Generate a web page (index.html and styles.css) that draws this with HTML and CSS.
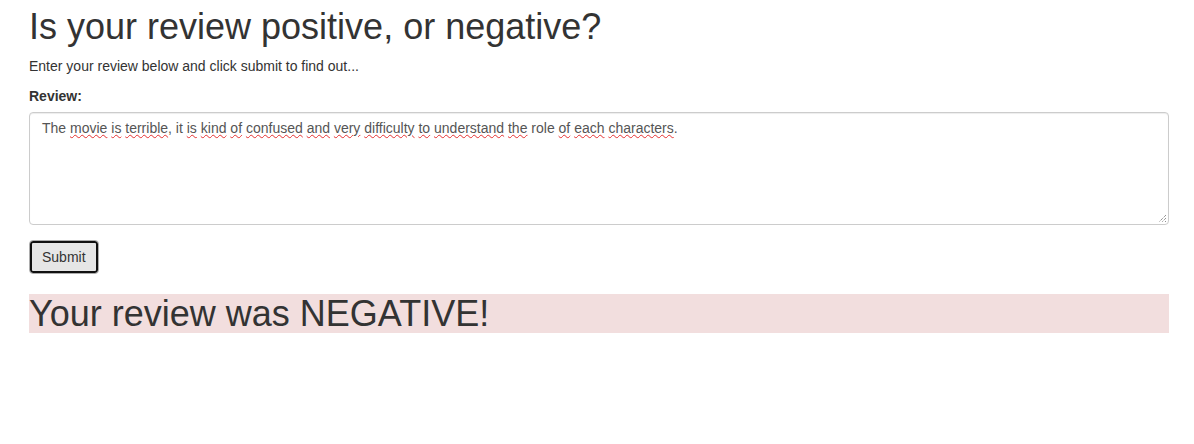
FILE: index.html
```html
<!DOCTYPE html>
<html lang="en">
<head>
<meta charset="utf-8">
<title>Review sentiment</title>
<link rel="stylesheet" href="styles.css">
</head>
<body>
<div class="container">
  <h1 class="title">Is your review positive, or negative?</h1>
  <p class="lead-text">Enter your review below and click submit to find out...</p>
  <form class="review-form">
    <div class="form-group">
      <label class="field-label">Review:</label>
      <div class="textbox" role="textbox" aria-multiline="true">The <span class="sp">movie</span> <span class="sp">is</span> <span class="sp">terrible</span>, it <span class="sp">is</span> <span class="sp">kind</span> <span class="sp">of</span> <span class="sp">confused</span> <span class="sp">and</span> <span class="sp">very</span> <span class="sp">difficulty</span> <span class="sp">to</span> <span class="sp">understand</span> <span class="sp">the</span> role <span class="sp">of</span> <span class="sp">each</span> <span class="sp">characters</span>.<svg class="grip" width="10" height="10" viewBox="0 0 10 10"><path d="M9 2 L2 9 M9 5 L5 9 M9 8 L8 9" stroke="#666" stroke-width="1" stroke-dasharray="1 1" fill="none"/></svg></div>
    </div>
    <button type="button" class="btn">Submit</button>
  </form>
  <h1 class="result">Your review was NEGATIVE!</h1>
</div>
</body>
</html>
```
FILE: styles.css
```css
html, body {
  margin: 0;
  padding: 0;
  background: #fff;
}
body {
  font-family: "Liberation Sans", Arial, Helvetica, sans-serif;
  font-size: 14px;
  line-height: 20px;
  color: #333;
}
.container {
  padding: 7px 25px 0 29px;
}
.title {
  margin: 0 0 9px;
  font-size: 36px;
  font-weight: 500;
  line-height: 39.6px;
}
.lead-text {
  margin: 0 0 10px;
}
.review-form {
  margin: 0;
}
.form-group {
  margin-bottom: 15px;
}
.field-label {
  display: inline-block;
  font-weight: bold;
  margin-bottom: 6px;
}
.textbox {
  position: relative;
  box-sizing: border-box;
  height: 113px;
  padding: 5px 12px 6px;
  border: 1px solid #ccc;
  border-radius: 4px;
  box-shadow: inset 0 1px 1px rgba(0,0,0,.075);
  color: #555;
  background: #fff;
}
.sp {
  text-decoration: underline wavy #e53030;
  text-decoration-thickness: 1px;
  text-underline-offset: 1px;
}
.grip {
  position: absolute;
  right: 1px;
  bottom: 1px;
}
.btn {
  display: block;
  box-sizing: border-box;
  height: 34px;
  padding: 6px 12px;
  font-family: inherit;
  font-size: 14px;
  line-height: 20px;
  color: #333;
  background: #e6e6e6;
  border: 1px solid #adadad;
  border-radius: 4px;
  box-shadow: inset 0 0 0 2px #111;
}
.result {
  margin: 20px 0 0;
  font-size: 36px;
  font-weight: 500;
  line-height: 39.6px;
  background: #f2dede;
}
```
